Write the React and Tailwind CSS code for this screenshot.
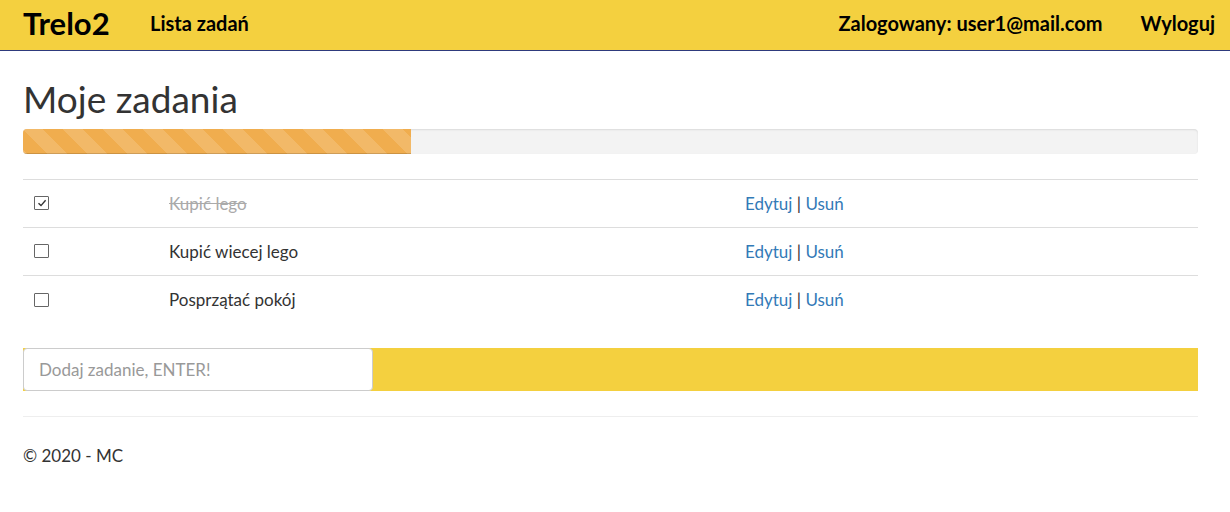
import { useState } from "react";

const tasks = [
  { id: 1, name: "Kupić lego", done: true },
  { id: 2, name: "Kupić wiecej lego", done: false },
  { id: 3, name: "Posprzątać pokój", done: false },
];

function Check({ checked }) {
  return (
    <div className="w-[15px] h-[14px] border-[1.5px] border-[#666] rounded-[1px] bg-white flex items-center justify-center">
      {checked && (
        <svg width="10" height="10" viewBox="0 0 10 10">
          <path d="M1.5 5.2 L4 7.6 L8.6 2.2" fill="none" stroke="#333" strokeWidth="1.4" />
        </svg>
      )}
    </div>
  );
}

export default function App() {
  const [items] = useState(tasks);

  return (
    <div className="min-h-[512px] bg-white text-[#333]" style={{ fontFamily: "Lato, 'Open Sans', sans-serif" }}>
      {/* navbar */}
      <div className="h-[51px] bg-[#f4d03f] border-b border-[#2e3a7c] flex items-center pl-[23px] pr-[15px] text-black">
        <div className="text-[31px] font-bold leading-none w-[127px] mt-[-4px]">Trelo2</div>
        <div className="text-[20px] font-bold mt-[-4px]">Lista zadań</div>
        <div className="ml-auto text-[20px] font-bold mr-[38px] mt-[-4px]">Zalogowany: user1@mail.com</div>
        <div className="text-[20px] font-bold mt-[-4px]">Wyloguj</div>
      </div>

      <div className="px-[23px] w-[1221px]">
        <h1 className="text-[37px] leading-[40px] pt-[28px]">Moje zadania</h1>

        {/* progress */}
        <div className="mt-[10px] h-[25px] rounded-[4px] bg-[#f3f3f3] shadow-[inset_0_1px_2px_rgba(0,0,0,0.1)] overflow-hidden">
          <div className="h-full w-[33%] bg-[#f0ad4e] bg-[linear-gradient(45deg,rgba(255,255,255,0.15)_25%,transparent_25%,transparent_50%,rgba(255,255,255,0.15)_50%,rgba(255,255,255,0.15)_75%,transparent_75%,transparent)] bg-[length:40px_40px] shadow-[inset_0_-1px_0_rgba(0,0,0,0.15)]" />
        </div>

        {/* table */}
        <div className="mt-[25px] border-t border-[#ddd] text-[17px]">
          {items.map((t, i) => (
            <div key={t.id} className={`flex h-[48px] items-center ${i < items.length - 1 ? "border-b border-[#ddd]" : ""}`}>
              <div className="w-[138px] pl-[11px] mt-[-1px]">
                <Check checked={t.done} />
              </div>
              <div className={`w-[576px] px-[8px] ${t.done ? "line-through text-[#aaa]" : "text-[#333]"}`}>{t.name}</div>
              <div className="px-[8px] text-[#337ab7]">
                <span>Edytuj</span> <span className="text-[#333]">|</span> <span>Usuń</span>
              </div>
            </div>
          ))}
        </div>

        {/* add */}
        <div className="mt-[24px] h-[43px] bg-[#f4d03f] flex items-center">
          <input
            className="w-[350px] h-[43px] border border-[#ccc] rounded-[4px] bg-white px-[15px] text-[17px] outline-none placeholder:text-[#999]"
            placeholder="Dodaj zadanie, ENTER!"
          />
        </div>

        <hr className="mt-[25px] border-t border-[#eee]" />
        <footer className="mt-[26px] text-[17px]">© 2020 - MC</footer>
      </div>
    </div>
  );
}
